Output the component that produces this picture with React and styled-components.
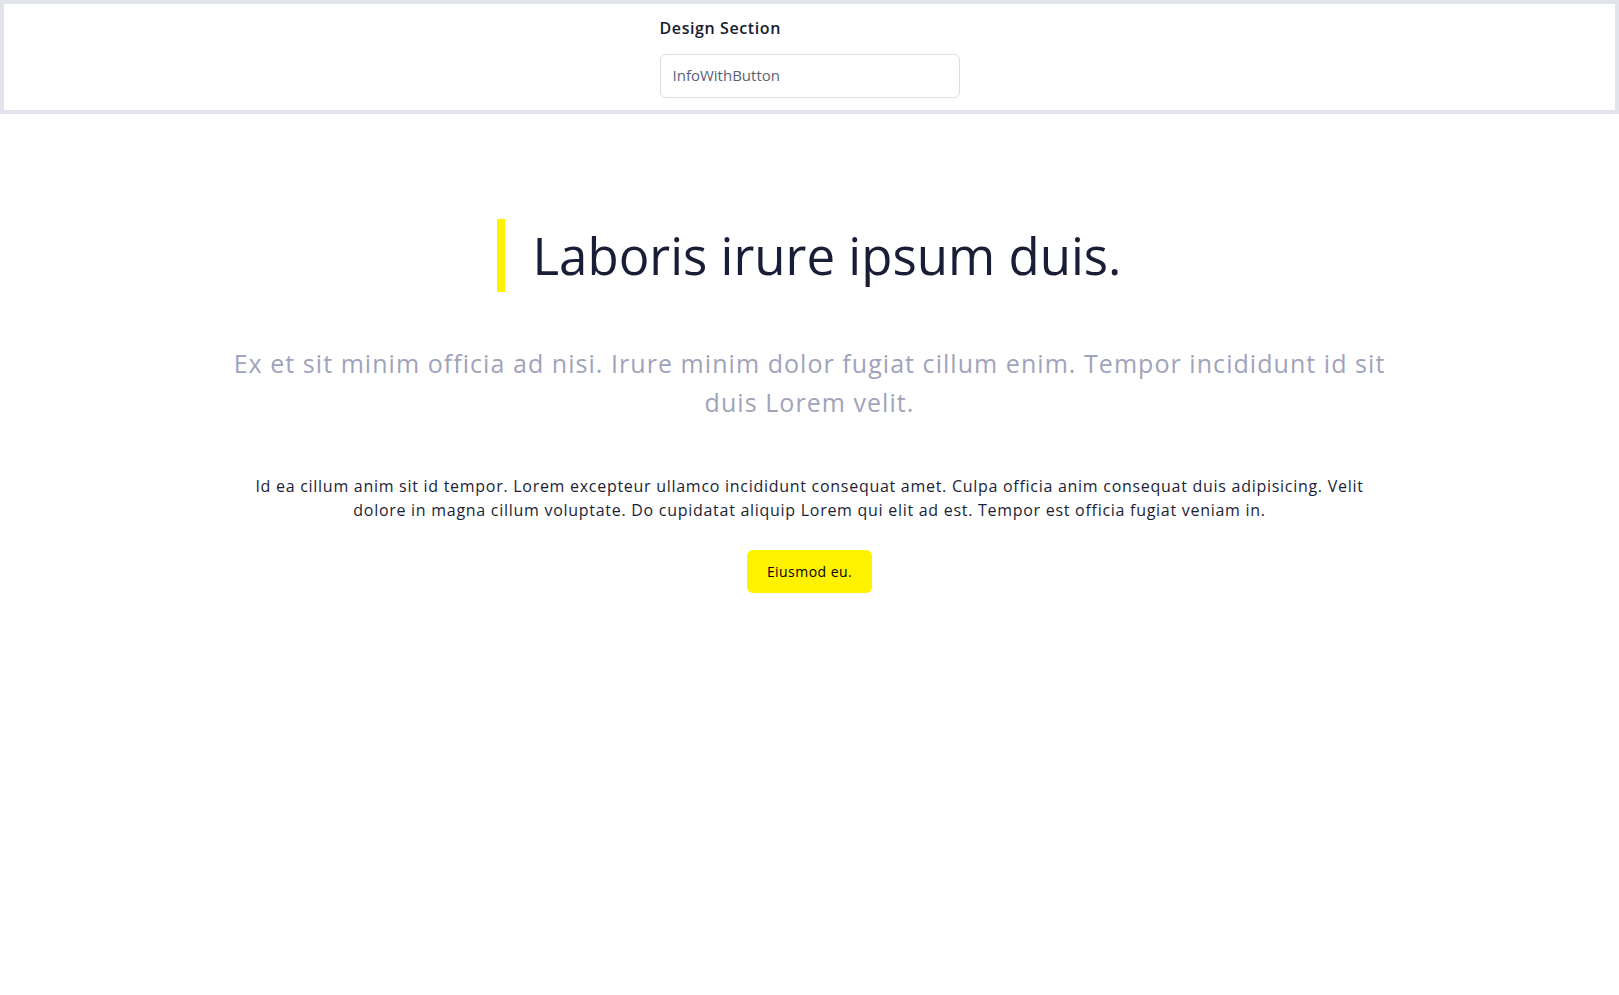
import styled, { createGlobalStyle } from "styled-components";

const GlobalStyle = createGlobalStyle`
  * { box-sizing: border-box; }
  body {
    margin: 0;
    background: #ffffff;
    font-family: "Open Sans", "Liberation Sans", sans-serif;
    color: #191d35;
  }
`;

const TopPanel = styled.header`
  height: 114px;
  border: 4px solid #e1e3eb;
  display: flex;
  justify-content: center;
  padding-top: 13px;
`;

const Field = styled.label`
  width: 300px;
  display: flex;
  flex-direction: column;
  gap: 15px;
`;

const FieldLabel = styled.span`
  font-size: 16px;
  font-weight: 600;
  line-height: 22px;
  letter-spacing: 0.6px;
  color: #171a30;
`;

const FieldInput = styled.input`
  height: 44px;
  border: 1px solid #dcdee6;
  border-radius: 6px;
  padding: 0 12px 3px;
  font-family: inherit;
  font-size: 15px;
  color: #5d6177;
  background: #fff;
  outline: none;
`;

const Section = styled.main`
  display: flex;
  flex-direction: column;
  align-items: center;
  padding: 105px 24px 0;
  text-align: center;
`;

const Heading = styled.h1`
  margin: 0;
  border-left: 8px solid #fff200;
  padding-left: 27px;
  font-size: 51px;
  font-weight: 400;
  line-height: 73px;
  color: #191d35;
`;

const Lead = styled.p`
  margin: 52px 0 0;
  max-width: 1190px;
  font-size: 25px;
  line-height: 38.5px;
  letter-spacing: 1.05px;
  font-weight: 400;
  color: #a0a3bb;
`;

const Body = styled.p`
  margin: 53px 0 0;
  max-width: 1135px;
  font-size: 16px;
  line-height: 24px;
  letter-spacing: 0.72px;
  color: #1b1e36;
`;

const Action = styled.button`
  margin-top: 28px;
  height: 43px;
  padding: 0 20px;
  border: none;
  border-radius: 6px;
  background: #fff200;
  color: #000;
  font-family: inherit;
  font-size: 14px;
  font-weight: 500;
  letter-spacing: 0.45px;
  cursor: pointer;
`;

export default function App() {
  return (
    <>
      <GlobalStyle />
      <TopPanel>
        <Field>
          <FieldLabel>Design Section</FieldLabel>
          <FieldInput readOnly value="InfoWithButton" />
        </Field>
      </TopPanel>
      <Section>
        <Heading>Laboris irure ipsum duis.</Heading>
        <Lead>
          Ex et sit minim officia ad nisi. Irure minim dolor fugiat cillum enim. Tempor incididunt id sit duis Lorem velit.
        </Lead>
        <Body>
          Id ea cillum anim sit id tempor. Lorem excepteur ullamco incididunt consequat amet. Culpa officia anim consequat duis adipisicing. Velit dolore in magna cillum voluptate. Do cupidatat aliquip Lorem qui elit ad est. Tempor est officia fugiat veniam in.
        </Body>
        <Action>Eiusmod eu.</Action>
      </Section>
    </>
  );
}
